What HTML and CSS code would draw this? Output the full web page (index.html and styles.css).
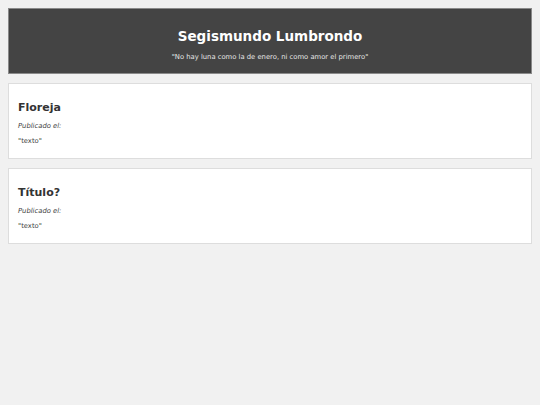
FILE: index.html
```html
<!DOCTYPE html>
<html lang="es">
<head>
<meta charset="utf-8">
<title>Segismundo Lumbrondo</title>
<link rel="stylesheet" href="styles.css">
</head>
<body>
<header class="site-header">
  <h1 class="site-title">Segismundo Lumbrondo</h1>
  <p class="site-tagline">"No hay luna como la de enero, ni como amor el primero"</p>
</header>
<main class="posts">
  <article class="post">
    <h2 class="post-title">Floreja</h2>
    <p class="post-meta">Publicado el:</p>
    <p class="post-body">"texto"</p>
  </article>
  <article class="post">
    <h2 class="post-title">Título?</h2>
    <p class="post-meta">Publicado el:</p>
    <p class="post-body">"texto"</p>
  </article>
</main>
</body>
</html>
```

FILE: styles.css
```css
html, body {
  margin: 0;
  padding: 0;
}
body {
  background: #f1f1f1;
  font-family: "DejaVu Sans", Verdana, sans-serif;
  color: #333;
  padding: 8px;
}
.site-header {
  background: #444444;
  border: 1px solid #8a8a8a;
  height: 64px;
  box-sizing: content-box;
  display: flex;
  flex-direction: column;
  align-items: center;
  padding: 0;
}
.site-title {
  margin: 18px 0 0;
  font-size: 13.5px;
  line-height: 18px;
  font-weight: bold;
  color: #ffffff;
}
.site-tagline {
  margin: 8px 0 0;
  font-size: 6.8px;
  line-height: 8px;
  color: #e6e6e6;
}
.posts {
  display: flex;
  flex-direction: column;
  gap: 9px;
  margin-top: 9px;
}
.post {
  background: #ffffff;
  border: 1px solid #dddddd;
  height: 74px;
  padding: 0 9px;
}
.post-title {
  margin: 16px 0 0;
  font-size: 11px;
  line-height: 16px;
  font-weight: bold;
  color: #333;
}
.post-meta {
  margin: 6px 0 0;
  font-size: 6.8px;
  line-height: 9px;
  font-style: italic;
  color: #444;
}
.post-body {
  margin: 6px 0 0;
  font-size: 6.8px;
  line-height: 9px;
  color: #444;
}
```
